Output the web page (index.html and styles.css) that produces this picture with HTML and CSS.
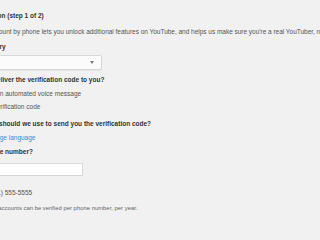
FILE: index.html
```html
<!DOCTYPE html>
<html lang="en">
<head>
    <meta charset="UTF-8">
    <title>Verify your account - YouTube</title>
    <link rel="stylesheet" href="styles.css">
</head>
<body>
    <main class="verify">
        <h2 class="verify-title">Account verification (step 1 of 2)</h2>
        <p class="verify-intro">Verifying your account by phone lets you unlock additional features on YouTube, and helps us make sure you're a real YouTuber, not a robot.</p>

        <div class="field-label country-label">Select your country</div>
        <div class="select-box">
            <span class="select-value">United States</span>
            <span class="select-arrow"></span>
        </div>

        <div class="field-label deliver-label">How should we deliver the verification code to you?</div>
        <label class="radio-row first"><span class="radio"></span>Call me with an automated voice message</label>
        <label class="radio-row second"><span class="radio checked"></span>Text me the verification code</label>

        <div class="field-label lang-label">What language should we use to send you the verification code?</div>
        <div class="lang-row"><span class="lang-name">English</span> <a href="#" class="lang-link">Change language</a></div>

        <div class="field-label phone-label">What is your phone number?</div>
        <input type="text" class="phone-input">

        <div class="example">For example: (201) 555-5555</div>
        <div class="notice"><b>Important:</b> A maximum of 2 accounts can be verified per phone number, per year.</div>
    </main>
</body>
</html>
```
FILE: styles.css
```css
* { margin: 0; padding: 0; box-sizing: border-box; }
body { background: #f1f1f1; font-family: 'Liberation Sans', Arial, sans-serif; font-size: 6.5px; line-height: 10px; color: #333; overflow: hidden; width: 320px; height: 240px; }
/* stranka je oriznuta zleva, proto zaporny okraj */
.verify { margin-left: -52px; padding-top: 11px; white-space: nowrap; }
.verify-title { margin-left: -5px; font-size: 6.5px; font-weight: bold; color: #333; }
.verify-intro { margin-top: 6px; color: #555; letter-spacing: -0.02px; }
.field-label { margin-top: 5px; font-weight: bold; color: #333; }
.country-label { margin-left: -3px; }
.select-box { margin-top: 3px; width: 154px; height: 15px; background: #fbfbfb; border: 1px solid #d8d8d8; border-radius: 2px; box-shadow: 0 1px 0 rgba(0, 0, 0, 0.05); display: flex; align-items: center; justify-content: space-between; padding: 0 7px 0 6px; color: #333; }
.select-arrow { width: 0; height: 0; border-left: 2px solid transparent; border-right: 2px solid transparent; border-top: 3px solid #777; }
.deliver-label { margin-top: 5px; margin-left: -4px; }
.radio-row { display: flex; align-items: center; gap: 4px; color: #555; margin-top: 3px; }
.radio-row.first { margin-top: 4px; }
.radio-row.second { margin-left: -1px; }
.radio { width: 7px; height: 7px; border: 1px solid #aaa; border-radius: 50%; background: #fff; }
.radio.checked { background: radial-gradient(circle, #555 40%, #fff 45%); }
.lang-label { margin-top: 7px; margin-left: 3px; }
.lang-row { margin-top: 4px; margin-left: 13px; color: #555; }
.lang-link { color: #2b8fd6; text-decoration: none; }
.phone-label { margin-top: 4px; margin-left: -5px; }
.phone-input { display: block; margin-top: 6px; width: 135px; height: 13px; background: #fff; border: 1px solid #d8d8d8; outline: none; }
.example { margin-top: 12px; color: #555; }
.notice { margin-top: 5px; margin-left: -24px; font-size: 5.9px; color: #666; }
```
